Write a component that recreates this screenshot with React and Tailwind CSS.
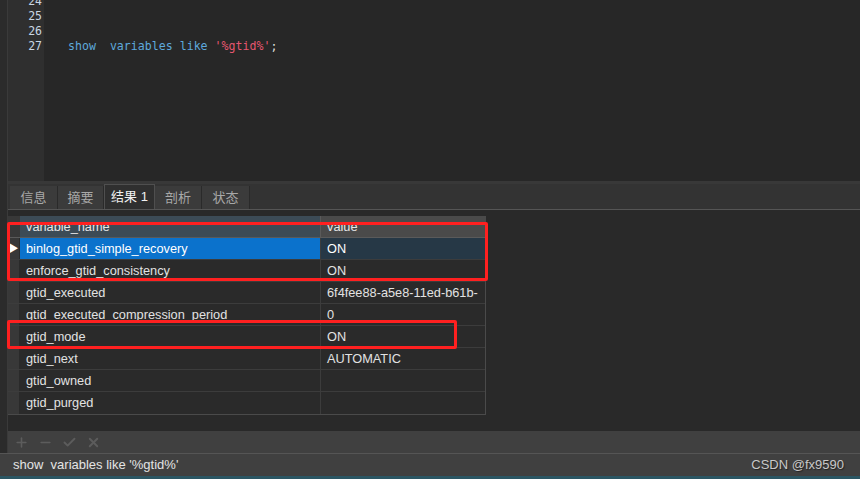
import { Plus, Minus, Check, X } from 'lucide-react';

const ui = { fontFamily: '"Liberation Sans", "Noto Sans CJK SC", sans-serif' };
const mono = { fontFamily: '"DejaVu Sans Mono", "Liberation Mono", monospace' };

const rows = [
  ['binlog_gtid_simple_recovery', 'ON'],
  ['enforce_gtid_consistency', 'ON'],
  ['gtid_executed', '6f4fee88-a5e8-11ed-b61b-'],
  ['gtid_executed_compression_period', '0'],
  ['gtid_mode', 'ON'],
  ['gtid_next', 'AUTOMATIC'],
  ['gtid_owned', ''],
  ['gtid_purged', ''],
];

const tabs = ['信息', '摘要', '结果 1', '剖析', '状态'];
const tabWidths = ['w-[48px]', 'w-[46px]', 'w-[51px]', 'w-[47px]', 'w-[48px]'];

function Editor() {
  return (
    <div className="flex h-[181px] bg-[#272727]">
      <div className="w-[36px] shrink-0 bg-[#2f2f2f] text-right text-[11.5px] leading-[15px] text-[#c9d6e3]" style={mono}>
        <div className="-mt-[6px] pr-[2px]">
          <div>24</div>
          <div>25</div>
          <div>26</div>
          <div>27</div>
        </div>
      </div>
      <div className="flex-1 pl-[24px] text-[11.6px] leading-[15px]" style={mono}>
        <div className="mt-[39px] whitespace-pre">
          <span className="text-[#5ea9dc]">show  variables like </span>
          <span className="text-[#e5566f]">'%gtid%'</span>
          <span className="text-[#dddddd]">;</span>
        </div>
      </div>
    </div>
  );
}

function Tabs() {
  return (
    <div className="border-t-[3px] border-[#383838] bg-[#333333]">
      <div className="flex h-[25px] items-end pl-[2px]">
        {tabs.map((t, i) => (
          <div
            key={t}
            className={`${tabWidths[i]} flex items-center justify-center text-[13px] ${
              i === 2
                ? 'h-[25px] border-x border-t border-[#4f4f4f] bg-[#2f2f2f] text-[#f0f0f0]'
                : 'h-[23px] border-r border-[#2a2a2a] bg-[#3b3b3b] text-[#a8a8a8]'
            }`}
          >
            {t}
          </div>
        ))}
      </div>
      <div className="h-px bg-[#555555]" />
    </div>
  );
}

function Grid() {
  return (
    <div className="flex-1 bg-[#292929] pt-[6px]">
      <div className="w-[478px] border-r border-b border-[#4a4a4a] text-[12.75px]">
        <div className="flex h-[22px] border-b border-[#5a5a5a]">
          <div className="w-[12px] bg-[#383838]" />
          <div className="flex w-[300px] items-center bg-[#3c4b56] pl-[6px] text-[#e6e6e6]">variable_name</div>
          <div className="flex flex-1 items-center border-l border-[#5a5a5a] bg-[#4a4a4a] pl-[6px] text-[#e6e6e6]">value</div>
        </div>
        {rows.map(([name, value], i) => (
          <div key={name} className="flex h-[22px] border-b border-[#3c3c3c] last:border-b-0">
            <div className="flex w-[12px] items-center justify-center bg-[#383838] border-r border-[#2a2a2a]">
              {i === 0 && <span className="text-[10px] leading-none text-white">▶</span>}
            </div>
            <div
              className={`flex w-[300px] items-center whitespace-nowrap pl-[6px] ${
                i === 0 ? 'bg-[#0b72cc] text-white' : 'bg-[#2a2a2a] text-[#e2e2e2]'
              }`}
            >
              {name}
            </div>
            <div
              className={`flex flex-1 items-center overflow-hidden whitespace-nowrap border-l border-[#3c3c3c] pl-[6px] ${
                i === 0 ? 'bg-[#263846] text-white' : 'bg-[#2a2a2a] text-[#e2e2e2]'
              }`}
            >
              {value}
            </div>
          </div>
        ))}
      </div>
    </div>
  );
}

function Toolbar() {
  return (
    <div className="flex h-[22px] items-center gap-[9px] bg-[#404040] pl-[6px] text-[#5c5c5c]">
      <Plus size={15} strokeWidth={2.5} />
      <Minus size={15} strokeWidth={2.5} />
      <Check size={15} strokeWidth={3} />
      <X size={15} strokeWidth={3} />
    </div>
  );
}

export default function App() {
  return (
    <div className="relative flex h-[479px] w-[860px] flex-col overflow-hidden bg-[#272727]" style={ui}>
      <div className="flex h-[453px]">
        <div className="w-[8px] shrink-0 border-r border-[#3a3a3a] bg-[#2b2b2b]" />
        <div className="flex flex-1 flex-col">
          <Editor />
          <Tabs />
          <Grid />
          <Toolbar />
        </div>
      </div>
      <div className="flex h-[23px] items-center justify-between border-t border-[#555555] bg-[#404040] pl-[13px] pr-[16px]">
        <span className="whitespace-pre text-[13px] text-[#e4e4e4]">show  variables like '%gtid%'</span>
        <span className="text-[13px] text-[#c8c8c8]" style={{ textShadow: '1px 1px 1px #222' }}>CSDN @fx9590</span>
      </div>
      <div className="h-[3px] bg-[#2b5663]" />

      <div className="pointer-events-none absolute left-[7px] top-[222px] h-[59px] w-[481px] border-[3px] border-[#ff2020] rounded-[2px]" />
      <div className="pointer-events-none absolute left-[7px] top-[320px] h-[29px] w-[450px] border-[3px] border-[#ff2020] rounded-[2px]" />
    </div>
  );
}
